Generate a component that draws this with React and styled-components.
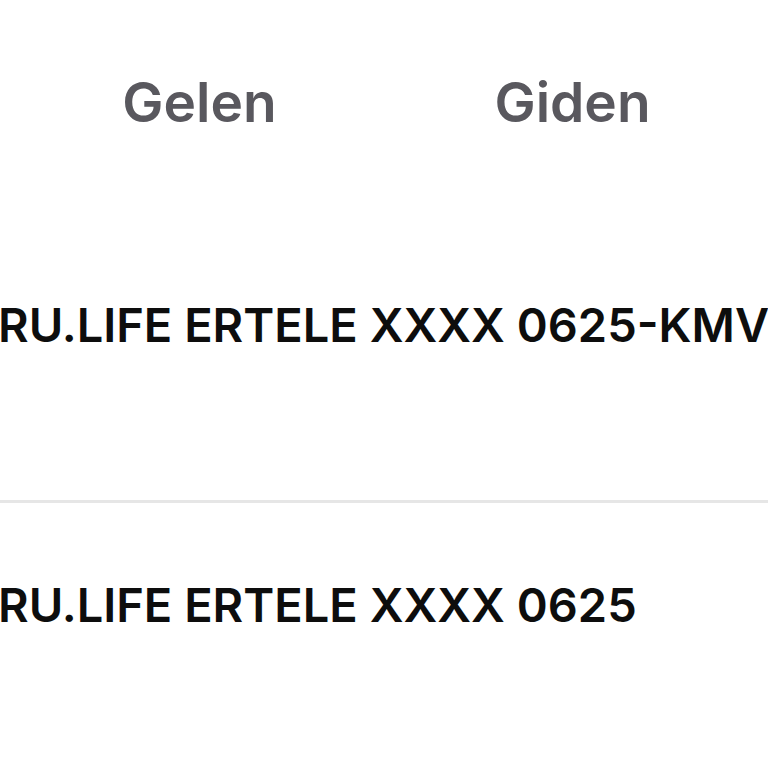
import React from 'react';
import styled, { createGlobalStyle } from 'styled-components';

const GlobalStyle = createGlobalStyle`
  html, body {
    margin: 0;
    padding: 0;
    background: #ffffff;
    overflow: hidden;
  }
  body {
    font-family: Inter, "Liberation Sans", sans-serif;
  }
`;

const rows = [
  { id: 1, title: 'RU.LIFE ERTELE XXXX 0625-KMV' },
  { id: 2, title: 'RU.LIFE ERTELE XXXX 0625' },
];

export default function App() {
  return (
    <>
      <GlobalStyle />
      <Screen>
        <TabBar>
          <Tab>Gelen</Tab>
          <Tab>Giden</Tab>
        </TabBar>
        <List>
          {rows.map((row) => (
            <Row key={row.id}>
              <Title>{row.title}</Title>
            </Row>
          ))}
        </List>
      </Screen>
    </>
  );
}

const Screen = styled.div`
  width: 768px;
  height: 768px;
  overflow: hidden;
  background: #ffffff;
`;

const TabBar = styled.div`
  display: grid;
  grid-template-columns: 373px 373px;
  padding-left: 13px;
  height: 223px;
  align-items: start;
  padding-top: 72px;
  box-sizing: border-box;
`;

const Tab = styled.div`
  text-align: center;
  font-size: 55px;
  font-weight: 600;
  line-height: 60px;
  color: #59585e;
`;

const List = styled.div`
  display: flex;
  flex-direction: column;
`;

const Row = styled.div`
  box-sizing: border-box;
  height: 277px;
  padding-top: 73px;
  flex-shrink: 0;
  & + & {
    border-top: 3px solid #e6e6e6;
    height: 280px;
  }
`;

const Title = styled.div`
  font-size: 47px;
  line-height: 57px;
  font-weight: 600;
  color: #0d0d0d;
  white-space: nowrap;
  margin-left: -2px;
`;
